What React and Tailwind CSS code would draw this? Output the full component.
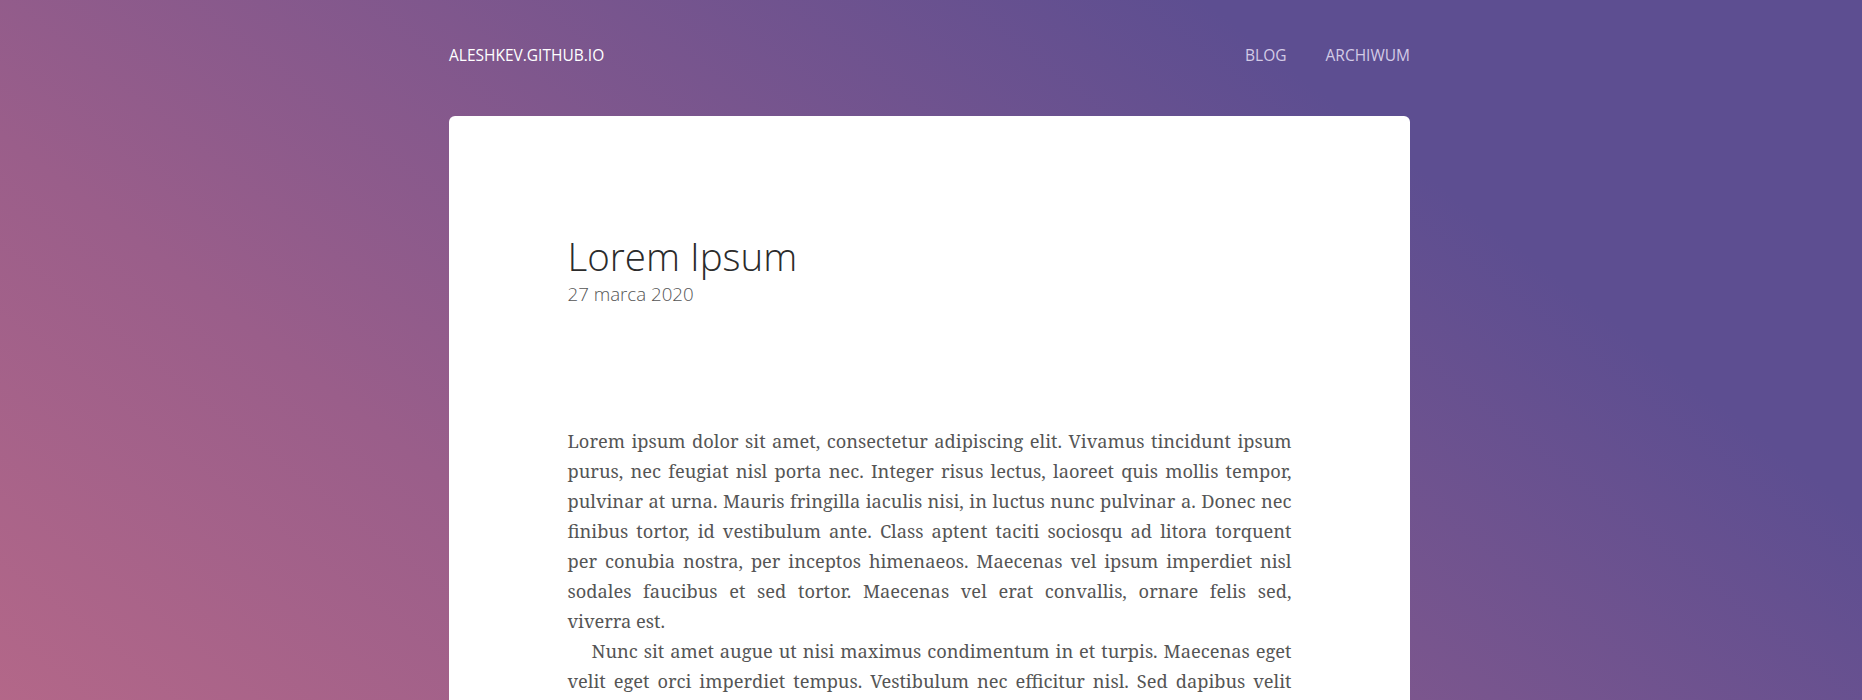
import React from "react";

// wiersze ulozone tak jak w oryginale, reszta leci zwyklym tekstem
const firstParagraph = [
  "Lorem ipsum dolor sit amet, consectetur adipiscing elit. Vivamus tincidunt ipsum",
  "purus, nec feugiat nisl porta nec. Integer risus lectus, laoreet quis mollis tempor,",
  "pulvinar at urna. Mauris fringilla iaculis nisi, in luctus nunc pulvinar a. Donec nec",
  "finibus tortor, id vestibulum ante. Class aptent taciti sociosqu ad litora torquent",
  "per conubia nostra, per inceptos himenaeos. Maecenas vel ipsum imperdiet nisl",
  "sodales faucibus et sed tortor. Maecenas vel erat convallis, ornare felis sed,",
];

const secondParagraph = [
  "Nunc sit amet augue ut nisi maximus condimentum in et turpis. Maecenas eget",
  "velit eget orci imperdiet tempus. Vestibulum nec efficitur nisl. Sed dapibus velit",
];

const Header = () => (
  <header className="w-[961px] ml-[calc(50%-482px)] pt-[45px] pb-[51px] flex items-center justify-between font-['Open_Sans','Noto_Sans',sans-serif] text-[15.5px] leading-5">
    <a className="text-white">ALESHKEV.GITHUB.IO</a>
    <nav className="flex gap-[39px] text-[#d3cbe6]">
      <a>BLOG</a>
      <a>ARCHIWUM</a>
    </nav>
  </header>
);

const Line = ({ children, indent }) => (
  <span className={"block text-justify [text-align-last:justify]" + (indent ? " indent-6" : "")}>
    {children}
  </span>
);

export default function App() {
  return (
    <div className="min-h-screen overflow-hidden bg-[linear-gradient(38deg,#bb6a88_0%,#9a5e8a_32%,#5d4e91_78%,#5d4e91_100%)]">
      <Header />
      <main className="w-[961px] ml-[calc(50%-482px)] bg-white rounded-md pb-24">
        <article className="w-[724px] mx-auto pt-[116px]">
          {/* naglowek wpisu */}
          <h1 className="font-['Open_Sans','Noto_Sans',sans-serif] font-light text-[38.5px] leading-[48px] text-[#2b2b2b]">
            Lorem Ipsum
          </h1>
          <div className="mt-[2px] font-['Open_Sans','Noto_Sans',sans-serif] font-light text-[18.7px] leading-6 text-[#555]">
            27 marca 2020
          </div>

          <div className="mt-[120px] font-['Noto_Serif','DejaVu_Serif',serif] text-[18.25px] leading-[30px] text-[#555]">
            <p>
              {firstParagraph.map((l) => (
                <Line key={l}>{l}</Line>
              ))}
              <span className="block">viverra est.</span>
            </p>
            <p>
              {secondParagraph.map((l, i) => (
                <Line key={l} indent={i === 0}>
                  {l}
                </Line>
              ))}
              <span className="block text-justify">
                quis lorem fermentum, eget hendrerit nulla aliquet. Pellentesque habitant morbi
                tristique senectus et netus et malesuada fames ac turpis egestas. Curabitur at
                lacus sed sem tempus tristique.
              </span>
            </p>
          </div>
        </article>
      </main>
    </div>
  );
}
